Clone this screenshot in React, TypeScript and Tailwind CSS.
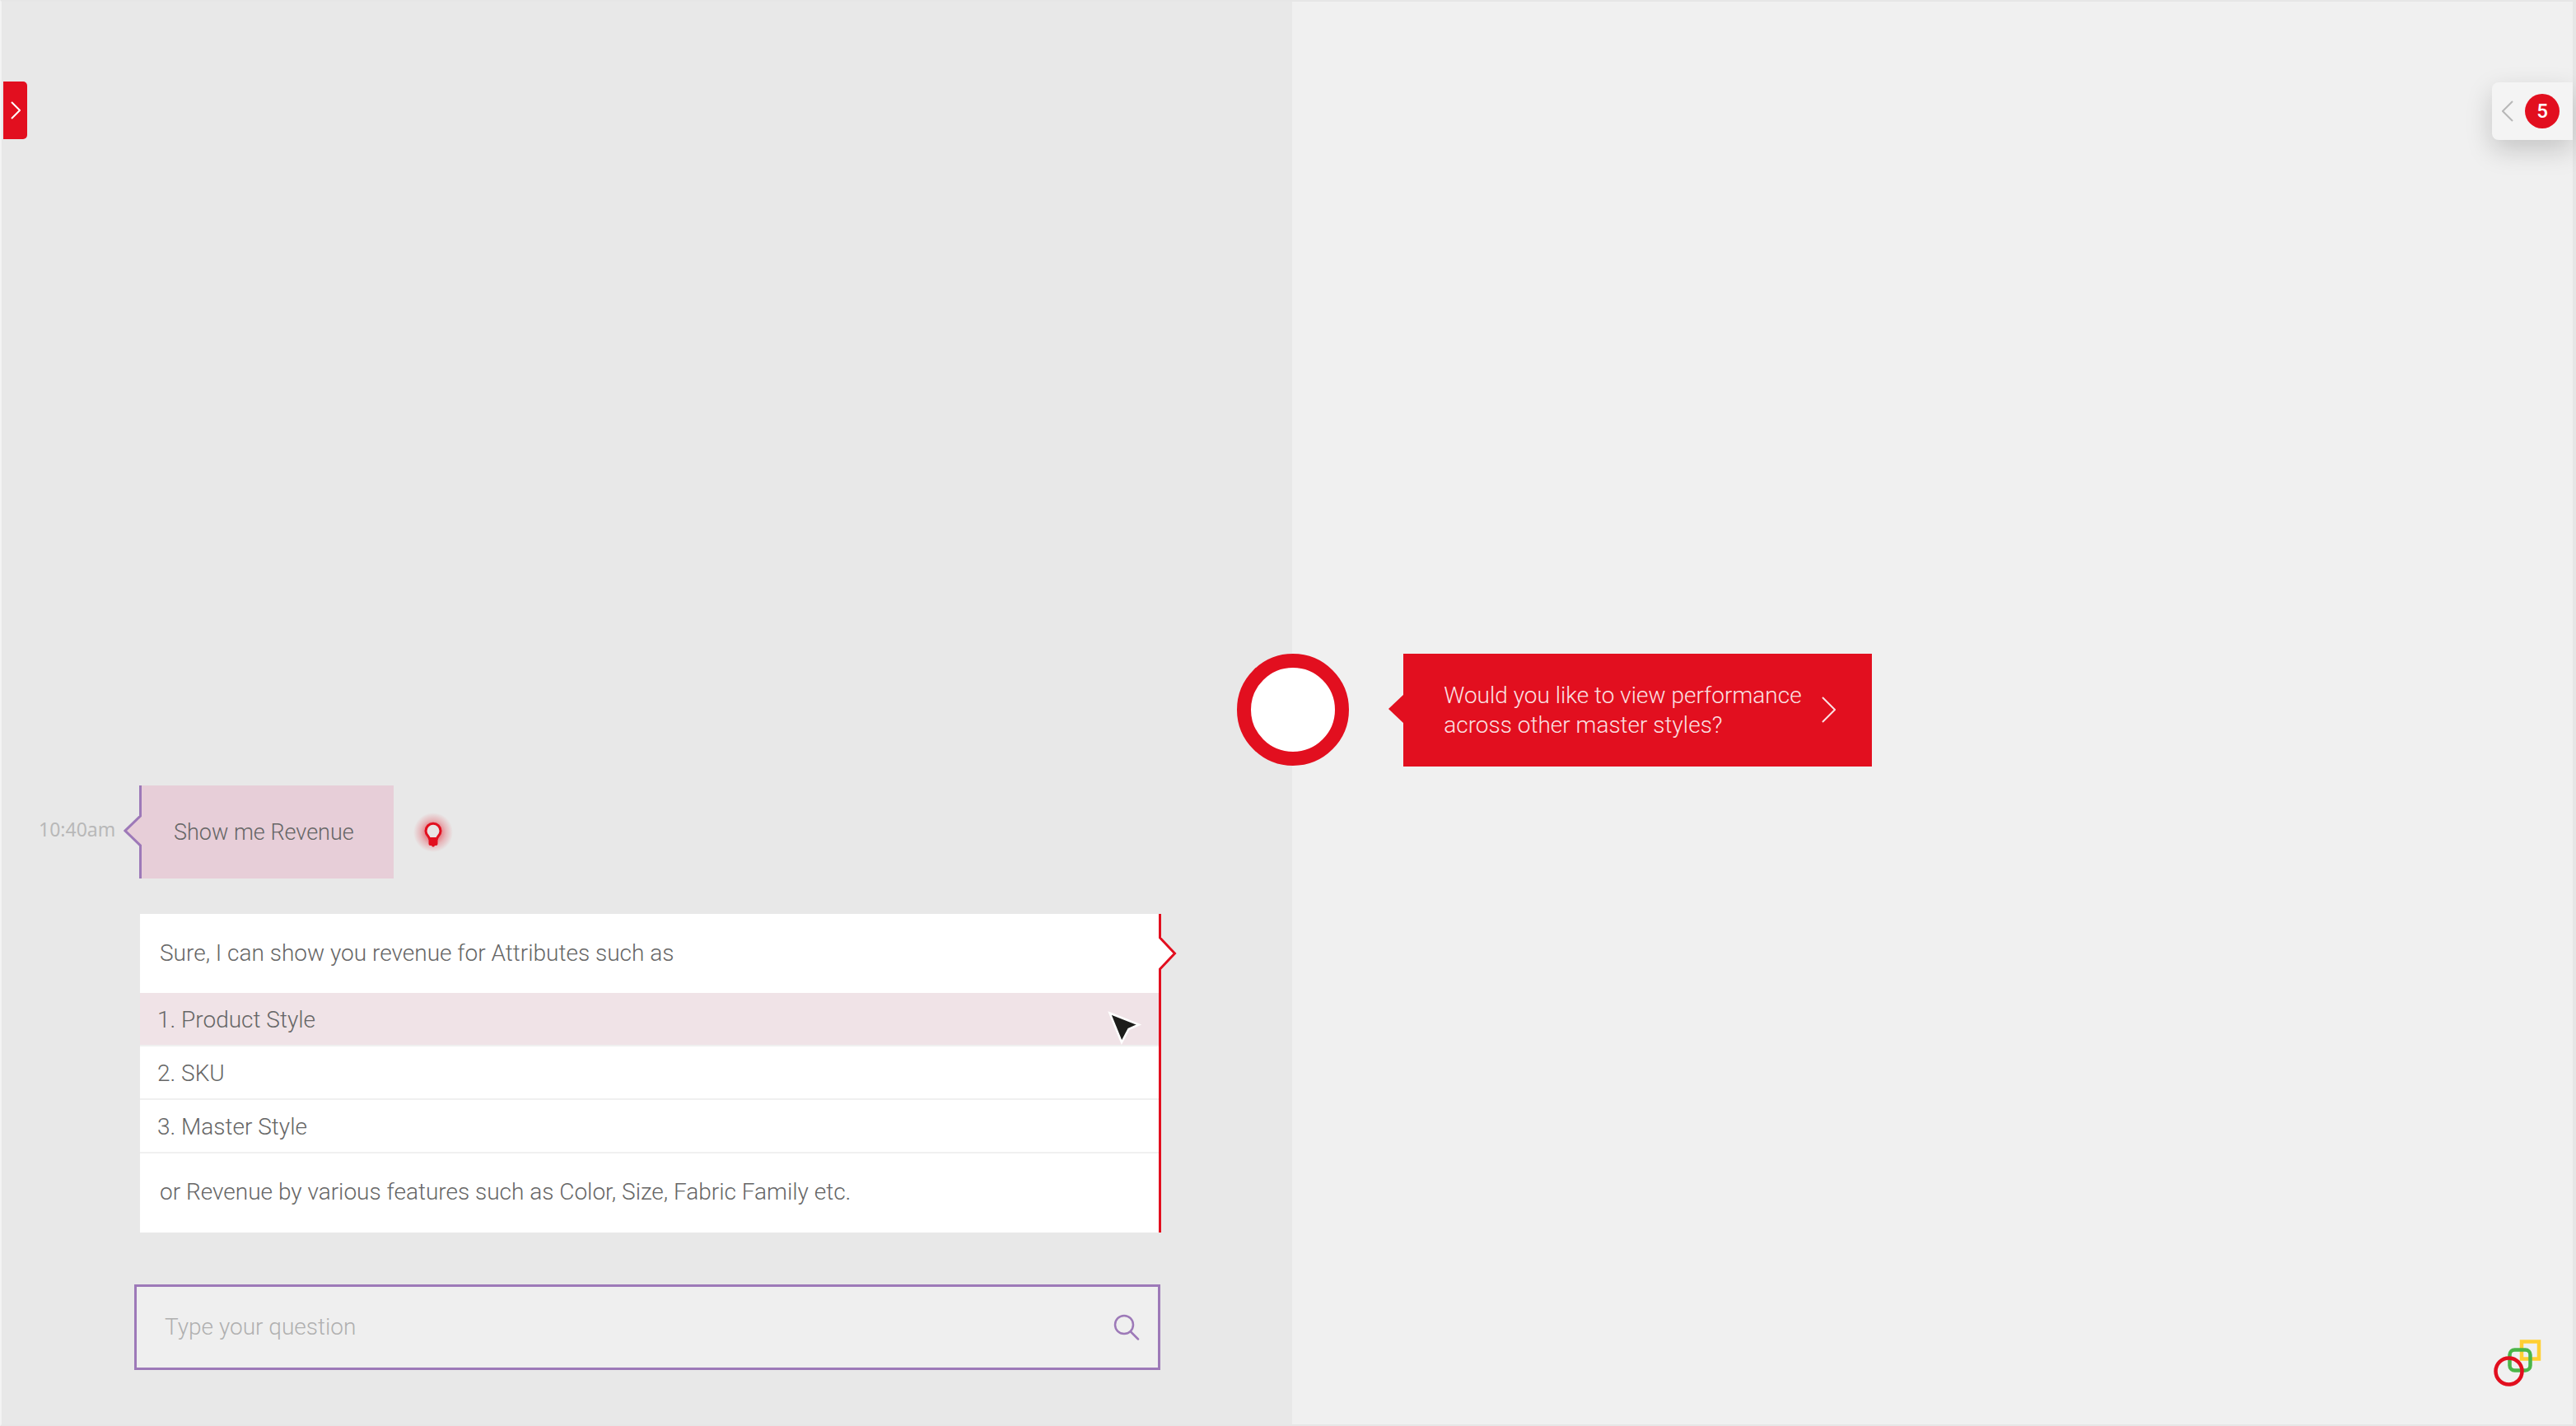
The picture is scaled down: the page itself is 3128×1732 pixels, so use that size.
const options = ["1. Product Style", "2. SKU", "3. Master Style"];

function Bulb() {
  return (
    <svg viewBox="0 0 48 48" className="size-12" aria-hidden="true">
      <defs>
        <radialGradient id="glow">
          <stop offset="0.3" stopColor="#e20f1f" stopOpacity="0.55" />
          <stop offset="0.65" stopColor="#e20f1f" stopOpacity="0.22" />
          <stop offset="1" stopColor="#e20f1f" stopOpacity="0" />
        </radialGradient>
      </defs>
      <circle cx="24" cy="24" r="24" fill="url(#glow)" />
      <path
        d="M24 13.2a9 9 0 0 0-9 9c0 4.400 3.300 6 4.500 9.300h9c1.200-3.300 4.500-4.900 4.500-9.300a9 9 0 0 0-9-9z"
        fill="#e8e4e4"
        stroke="#e20f1f"
        strokeWidth="3"
      />
      <path d="M18.500 31h11v7a2 2 0 0 1-2 2h-1.500l-1 1.500h-2l-1-1.500h-1.500a2 2 0 0 1-2-2z" fill="#e20f1f" />
    </svg>
  );
}

function Logo() {
  return (
    <svg viewBox="0 0 58 57" className="h-[57px] w-[58px]" fill="none" strokeWidth="4.500" aria-label="Logo" role="img">
      <rect x="34" y="2.500" width="21" height="21" stroke="#ffcf33" />
      <rect x="19.500" y="12.500" width="25" height="25" rx="6" stroke="#4ab548" />
      <circle cx="18.500" cy="38.500" r="16" stroke="#e20f1f" />
    </svg>
  );
}

function Pointer() {
  return (
    <svg viewBox="0 0 42 44" className="pointer-events-none absolute top-[22px] right-5 h-[44px] w-[42px]" aria-hidden="true">
      <path d="M2.500 2.500L38 16.500L25.500 22L17 38Z" fill="#1d1d1b" stroke="#fff" strokeWidth="2.500" />
    </svg>
  );
}

export default function App() {
  return (
    <main className="flex min-h-screen border-y-2 border-r-4 border-l-2 border-y-[#e6e6e6] border-r-[#e6e6e6] border-l-[#f3f3f3] bg-[#f0f0f0] font-['Roboto',sans-serif] text-[28px] leading-9 font-light text-[#666]">
      <section className="flex w-[50.2%] flex-col justify-between bg-[#e8e8e8] pt-[97px] pb-[66px] pl-0.5">
        <button type="button" aria-label="Open menu" className="flex h-[70px] w-[29px] items-center justify-center rounded-r-[5px] bg-[#e20f1f]">
          <svg viewBox="0 0 12 22" className="h-[22px] w-3" fill="none" stroke="#fff" strokeWidth="2" aria-hidden="true">
            <path d="M1 1l10 10L1 21" />
          </svg>
        </button>

        <div>
          <div className="flex items-center pl-[43px]">
            <time className="w-[122px] pb-2 font-['Noto_Sans',sans-serif] text-[23px] font-normal text-[#b8b8b8]">10:40am</time>
            <div className="relative flex h-[113px] items-center border-l-[3px] border-[#9d79b8] bg-[#e7ced8] pr-12 pl-[39px] text-[27px]">
              <svg viewBox="0 0 23 38" className="absolute top-9 -left-[22px] h-[38px] w-[23px]" aria-hidden="true">
                <path d="M23 0H20.500V1L2 19L20.500 37V38H23z" fill="#e7ced8" />
                <path d="M20.500 0V1L2 19L20.500 37V38" fill="none" stroke="#9d79b8" strokeWidth="3" />
              </svg>
              Show me Revenue
            </div>
            <div className="ml-6">
              <Bulb />
            </div>
          </div>

          <div className="relative mt-[43px] mr-[159px] ml-[166px] border-r-[3px] border-[#e20f1f] bg-white">
            <svg viewBox="0 0 23 40" className="absolute top-7 -right-[22px] h-10 w-[23px]" aria-hidden="true">
              <path d="M0 0H2.500V1L20.500 20L2.500 39V40H0z" fill="#fff" />
              <path d="M2.500 0V1L20.500 20L2.500 39V40" fill="none" stroke="#e20f1f" strokeWidth="3" />
            </svg>
            <p className="flex h-24 items-center px-6">Sure, I can show you revenue for Attributes such as</p>
            <ul>
              {options.map((option, index) => (
                <li key={option} className="relative border-b-2 border-[#f0f0f0]">
                  <button
                    type="button"
                    className={
                      index === 0
                        ? "block h-[63px] w-full bg-[#f0e3e7] px-[21px] pt-0.5 text-left"
                        : "block h-[63px] w-full px-[21px] pt-0.5 text-left"
                    }
                  >
                    {option}
                  </button>
                  {index === 0 && <Pointer />}
                </li>
              ))}
            </ul>
            <p className="flex h-24 items-center px-6 pb-0.5">
              or Revenue by various features such as Color, Size, Fabric Family etc.
            </p>
          </div>

          <form className="mt-[63px] mr-40 ml-[159px] flex h-[104px] items-center border-[3px] border-[#9d79b8] bg-[#efefef] pr-[22px] pl-[34px]">
            <input
              type="text"
              aria-label="Type your question"
              placeholder="Type your question"
              className="h-full min-w-0 flex-1 bg-transparent pb-0.5 outline-none placeholder:text-[#b0b0b0]"
            />
            <button type="button" aria-label="Search">
              <svg viewBox="0 0 32 32" className="size-8" fill="none" stroke="#9d79b8" strokeWidth="2.500" strokeLinecap="round" aria-hidden="true">
                <circle cx="13" cy="13" r="11" />
                <path d="M21 21.500l9 9" />
              </svg>
            </button>
          </form>
        </div>
      </section>

      <section className="flex min-w-0 flex-1 flex-col pt-[98px] pb-[46px]">
        <button type="button" aria-label="Show 5 notifications" className="flex h-[70px] w-[98px] items-center gap-3.5 self-end rounded-l-lg bg-[#f4f4f4] pl-3 shadow-[0_12px_32px_rgba(0,0,0,0.18)]">
          <svg viewBox="0 0 14 26" className="h-[26px] w-3.5" fill="none" stroke="#b8b8b8" strokeWidth="2" aria-hidden="true">
            <path d="M13 1L1 13l12 12" />
          </svg>
          <span className="flex size-[42px] items-center justify-center rounded-full bg-[#e20f1f] text-2xl font-medium text-white">5</span>
        </button>

        <div className="-ml-[67px] flex flex-1 items-center pb-[73px]">
          <div className="size-[136px] shrink-0 rounded-full border-[17px] border-[#e20f1f] bg-white" />
          <button type="button" className="relative ml-[66px] flex h-[137px] items-center gap-6 bg-[#e20f1f] pr-11 pl-[49px] text-left text-[#fbe0e2]">
            <svg viewBox="0 0 19 36" className="absolute top-[49px] -left-[18px] h-9 w-[19px]" aria-hidden="true">
              <path d="M19 0L0 18l19 18z" fill="#e20f1f" />
            </svg>
            <span className="pt-0.5">
              Would you like to view performance
              <br />
              across other master styles?
            </span>
            <svg viewBox="0 0 17 32" className="h-8 w-[17px]" fill="none" stroke="#fbe0e2" strokeWidth="2" aria-hidden="true">
              <path d="M1 1l15 15L1 31" />
            </svg>
          </button>
        </div>

        <div className="self-end pr-[38px]">
          <Logo />
        </div>
      </section>
    </main>
  );
}
